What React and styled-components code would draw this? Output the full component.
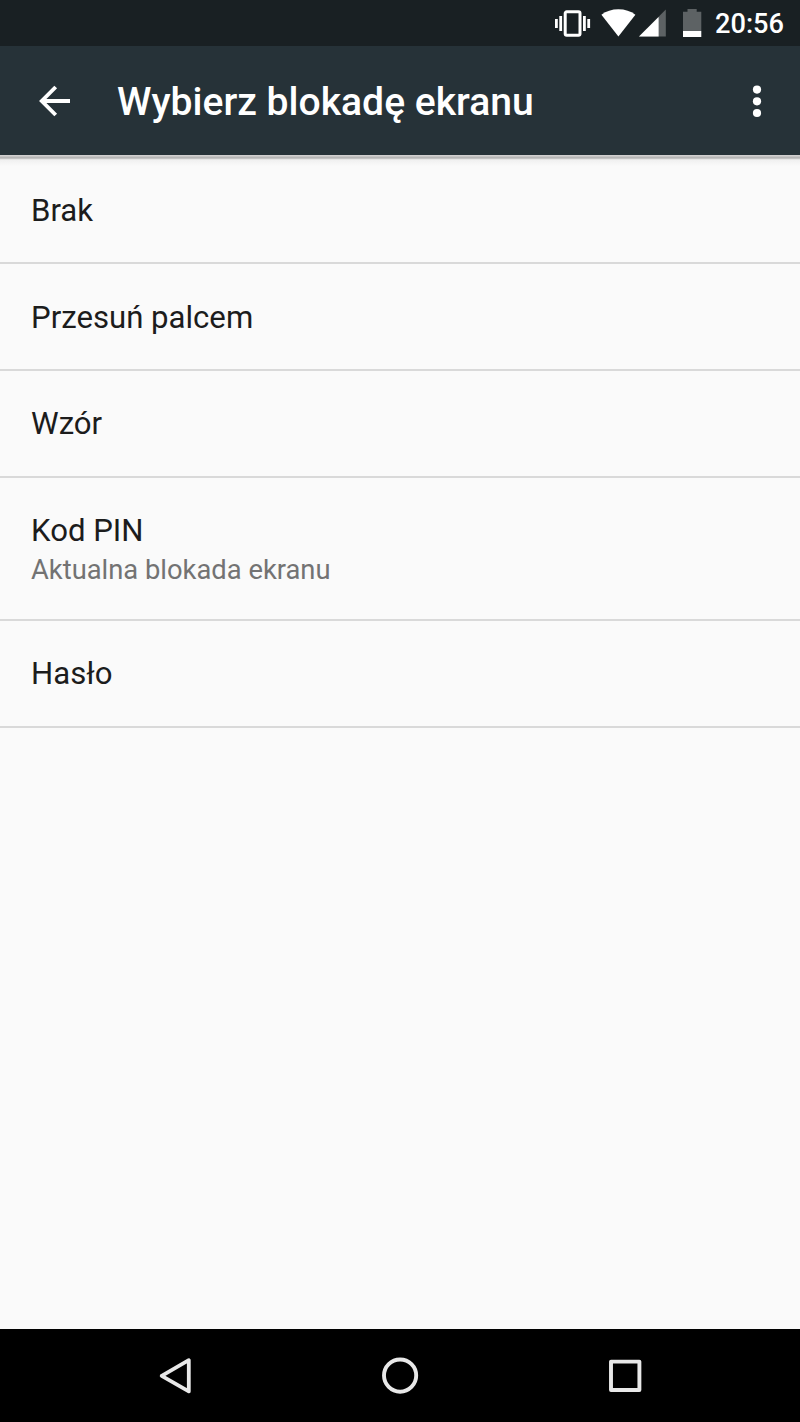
import React from 'react';
import styled, { createGlobalStyle } from 'styled-components';

const locks = [
  { name: 'Brak', height: 109, top: 35 },
  { name: 'Przesuń palcem', height: 107, top: 33 },
  { name: 'Wzór', height: 107, top: 32 },
  { name: 'Kod PIN', summary: 'Aktualna blokada ekranu', height: 143, top: 32 },
  { name: 'Hasło', height: 107, top: 32 },
];

const App = () => {
  return <Screen>
    <GlobalStyle />
    <StatusBar>
      <svg width="36" height="28" viewBox="0 0 36 28" fill="#fff">
        <rect x="0" y="10" width="2.8" height="9" />
        <rect x="4.3" y="7" width="2.8" height="15" />
        <rect x="28" y="7" width="2.8" height="15" />
        <rect x="32.3" y="10" width="2.8" height="9" />
        <rect x="10.2" y="2.8" width="14.8" height="23.4" rx="1.5" fill="none" stroke="#fff" strokeWidth="3" />
      </svg>
      <WifiIcon width="36" height="28" viewBox="0 0 36 28" fill="#fff">
        <path d="M0.4 5.8C5.1 2.2 10.9 0.3 17.4 0.3s12.3 1.9 17 5.5L17.4 27.4z" />
      </WifiIcon>
      <SignalIcon width="28" height="28" viewBox="0 0 28 28">
        <path d="M0 27.6L26.8 0.6v27z" fill="#5d6264" />
        <path d="M0 27.6L19.6 8v19.6z" fill="#fff" />
      </SignalIcon>
      <BatteryIcon width="19" height="29" viewBox="0 0 19 29">
        <path d="M4.5 0h9.2v2.8h4.6V22H0V2.8h4.5z" fill="#5d6264" />
        <path d="M0 22h18.3v6H0z" fill="#fff" />
      </BatteryIcon>
      <Clock>20:56</Clock>
    </StatusBar>
    <Toolbar>
      <BackButton aria-label="Wstecz">
        <svg width="32" height="32" viewBox="0 0 32 32" fill="none" stroke="#fff" strokeWidth="3.9">
          <path d="M31 16H3.5M16.7 2L2.8 16l13.9 14" />
        </svg>
      </BackButton>
      <Title>Wybierz blokadę ekranu</Title>
      <MenuButton aria-label="Menu">
        <svg width="10" height="34" viewBox="0 0 10 34" fill="#fff">
          <circle cx="5" cy="5.6" r="4.1" />
          <circle cx="5" cy="17.3" r="4.1" />
          <circle cx="5" cy="29" r="4.1" />
        </svg>
      </MenuButton>
    </Toolbar>
    <List>
      {locks.map((lock) => (
        <Row key={lock.name} $height={lock.height} $top={lock.top}>
          <Name>{lock.name}</Name>
          {lock.summary && <Summary>{lock.summary}</Summary>}
        </Row>
      ))}
    </List>
    <NavBar>
      <NavButton aria-label="Wstecz">
        <svg width="40" height="40" viewBox="0 0 40 40" fill="none" stroke="#e8e8e8" strokeWidth="3.8" strokeLinejoin="round">
          <path d="M33.8 4.2v31.2L6.7 19.8z" />
        </svg>
      </NavButton>
      <NavButton aria-label="Ekran główny">
        <svg width="40" height="40" viewBox="0 0 40 40" fill="none" stroke="#e8e8e8" strokeWidth="3.9">
          <circle cx="20.1" cy="19.6" r="16.1" />
        </svg>
      </NavButton>
      <NavButton aria-label="Ostatnie">
        <svg width="40" height="40" viewBox="0 0 40 40" fill="none" stroke="#e8e8e8" strokeWidth="3.9" strokeLinejoin="round">
          <rect x="6" y="5.6" width="28.4" height="28.4" />
        </svg>
      </NavButton>
    </NavBar>
  </Screen>;
};

export default App;

const GlobalStyle = createGlobalStyle`
body {
  margin: 0;
  background: #fafafa;
}
`;

const Screen = styled.div`
display: flex;
flex-direction: column;
width: 800px;
height: 1422px;
overflow: hidden;
background: #fafafa;
font-family: Roboto, "Noto Sans", sans-serif;
`;

const StatusBar = styled.div`
display: flex;
align-items: flex-start;
height: 46px;
flex-shrink: 0;
padding: 9px 16px 0 555px;
box-sizing: border-box;
background: #192023;
`;

const WifiIcon = styled.svg`
margin-left: 10px;
`;

const SignalIcon = styled.svg`
margin-left: 2px;
`;

const BatteryIcon = styled.svg`
margin-left: 16px;
`;

const Clock = styled.span`
margin-left: auto;
font-size: 27.2px;
font-weight: 500;
line-height: 31px;
color: #fff;
`;

const Toolbar = styled.header`
display: flex;
align-items: center;
height: 109px;
flex-shrink: 0;
background: #263238;
color: #fff;
`;

const IconButton = styled.button`
display: flex;
align-items: center;
padding: 0;
border: none;
outline: none;
background: none;
`;

const BackButton = styled(IconButton)`
width: 78px;
margin-left: 39px;
`;

const Title = styled.h1`
margin: 0;
padding-top: 3px;
font-size: 39.08px;
font-weight: 500;
line-height: 46px;
`;

const MenuButton = styled(IconButton)`
margin-left: auto;
margin-right: 38px;
`;

const List = styled.ul`
flex: 1;
margin: 0;
padding: 0;
list-style: none;
background: linear-gradient(#d0cfcf 0 1px, #c4c3c3 1px 2px, #b5b5b5 2px 3px, #c3c3c3 3px 4px, #e6e6e6 4px 5px, #f0f0f0 5px, #fafafa 11px);
`;

const Row = styled.li`
display: flex;
flex-direction: column;
height: ${(props) => props.$height}px;
padding: ${(props) => props.$top}px 31px 0;
box-sizing: border-box;
border-bottom: 2px solid #d9d9d9;
`;

const Name = styled.span`
font-size: 31.15px;
line-height: 41px;
color: #1c1c1c;
`;

const Summary = styled.span`
margin-top: 1px;
font-size: 27.35px;
line-height: 36px;
color: #737373;
`;

const NavBar = styled.nav`
display: flex;
justify-content: center;
gap: 185px;
height: 93px;
background: #000;
`;

const NavButton = styled(IconButton)`
width: 40px;
`;
